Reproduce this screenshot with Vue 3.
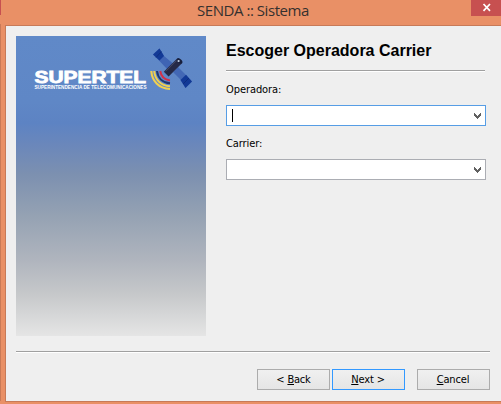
<script setup>
import { ref } from 'vue'

const fields = ref([
  { id: 'operadora', label: 'Operadora:', focused: true },
  { id: 'carrier', label: 'Carrier:', focused: false },
])
</script>

<template>
  <div class="window">
    <header class="titlebar">
      <h1>SENDA :: Sistema</h1>
      <button class="close" aria-label="Cerrar">
        <svg width="10" height="9" viewBox="0 0 10 9"><path d="M1.5 1 8 7.8M8 1 1.5 7.8" stroke="#fff" stroke-width="1.7" /></svg>
      </button>
    </header>
    <div class="body">
      <main class="content">
        <aside class="banner">
          <svg width="190" height="70" viewBox="16 36 190 70">
            <text class="brand" x="34.5" y="82.6" textLength="111.5" lengthAdjust="spacingAndGlyphs">SUPERTEL</text>
            <text class="tagline" x="34.5" y="88.9" textLength="112" lengthAdjust="spacingAndGlyphs">SUPERINTENDENCIA DE TELECOMUNICACIONES</text>
            <g fill="none">
              <path d="M151.3 71C152 81 158.5 88.5 170 89" stroke="#f0d050" stroke-width="2.1" />
              <path d="M154.2 71C155 79.5 160.5 85.7 170 86.3" stroke="#f0d050" stroke-width="2" />
              <path d="M157 71C157.8 77.8 162.5 82.7 170 83.3" stroke="#20376f" stroke-width="2" />
              <path d="M160.2 71C161 76 164.5 79.8 170 80.4" stroke="#d33148" stroke-width="2" />
            </g>
            <path d="M153 54.5 159.5 48.5 164 56 173 63.5 167 69 160 61.5Z" fill="#3f64b4" />
            <path d="M153 54.5 159.5 48.5 164 56 159.5 60.5Z" fill="#123996" />
            <path d="M173 72 178 67 184 73 192 81.5 185.5 88 180 79Z" fill="#4368b5" />
            <path d="M180.5 80 186 74.8 192 81.5 185.5 88Z" fill="#123996" />
            <path d="M156 57.5 161.5 51.5M183 84 189 78" stroke="#0b2876" stroke-width=".7" />
            <path d="M166.2 74.2 179.8 60.6" stroke="#252947" stroke-width="6.8" />
            <path d="M165.8 71.3 176.3 60.8" stroke="#50556f" stroke-width=".7" />
            <ellipse cx="179.7" cy="60.8" rx="1.8" ry="3.3" transform="rotate(-45 179.7 60.8)" fill="#17203d" />
            <circle cx="178.6" cy="61" r="1.1" fill="#c5cfe0" />
          </svg>
        </aside>
        <section class="form">
          <h2>Escoger Operadora Carrier</h2>
          <div v-for="field in fields" :key="field.id" class="field">
            <label>{{ field.label }}</label>
            <div class="combo" :class="{ focused: field.focused }">
              <i v-if="field.focused" class="caret"></i>
              <svg class="arrow" width="7" height="6" viewBox="0 0 7 6"><path d="M0 0h1v1h1v1h1v1h1V2h1V1h1V0h1v3H6v1H5v1H4v1H3V5H2V4H1V3H0Z" fill="#606060" /></svg>
            </div>
          </div>
        </section>
      </main>
      <footer>
        <button class="btn back"><span>&lt; <u>B</u>ack</span></button>
        <button class="btn next"><span><u>N</u>ext &gt;</span></button>
        <button class="btn cancel"><span><u>C</u>ancel</span></button>
      </footer>
    </div>
  </div>
</template>

<style>
body { margin: 0; overflow: hidden; }
</style>

<style scoped>
* { box-sizing: border-box; }
.window {
  width: 501px;
  height: 404px;
  display: flex;
  flex-direction: column;
  padding: 0 0 2px 5px;
  background:
    linear-gradient(#c75050 0 15px, #e99066 15px 24px, #c97a57 24px 401px, #e99066 401px) 0 0 / 1px 100% no-repeat,
    #e99066;
  font-family: "DejaVu Sans Condensed", "DejaVu Sans", sans-serif;
  color: #000;
}
.titlebar {
  height: 25px;
  display: flex;
  justify-content: space-between;
  align-items: flex-start;
}
h1 {
  margin: 0 0 0 192px;
  font: 400 15px/21px "Open Sans", sans-serif;
  letter-spacing: -.45px;
  color: #35302e;
  white-space: nowrap;
}
.close {
  width: 30px;
  height: 16px;
  padding: 0 0 2px 2px;
  border: 0;
  display: flex;
  align-items: center;
  justify-content: center;
  background: #c75050;
}
.body {
  flex: 1;
  border: 1px solid #c77a58;
  border-right: 0;
  background: #efefef;
  padding: 10px 11px 0 10px;
}
.content {
  height: 316px;
  display: flex;
  gap: 20px;
  border-bottom: 1px solid #a0a0a0;
  box-shadow: 0 1px #fff;
}
.banner {
  width: 190px;
  height: 300px;
  background: linear-gradient(#6089c8 0, #5f87c6 22%, #5d83c3 29%, #6a87bb 36%, #7c90b0 46%, #95a2b3 60%, #b0b5be 75%, #c6c8ca 86%, #e5e5e5 100%);
}
.banner svg { display: block; }
.brand { font: 700 16.6px "Liberation Sans", sans-serif; fill: #fff; stroke: #fff; stroke-width: .8px; }
.tagline { font: 700 5px "Liberation Sans", sans-serif; fill: #fff; }
.form { width: 260px; }
h2 {
  margin: 0 1px 0 0;
  height: 35px;
  border-bottom: 1px solid #a0a0a0;
  box-shadow: 0 1px #fff;
  font: 700 16px/29px "Liberation Sans", sans-serif;
  white-space: nowrap;
}
.field { height: 54px; padding-top: 10px; }
.field label { display: block; height: 24px; font-size: 11px; line-height: 17px; letter-spacing: -.08px; }
.combo {
  height: 21px;
  display: flex;
  align-items: center;
  border: 1px solid #abadb3;
  padding: 0 4px 0 5px;
  background: #fff;
}
.combo.focused { border-color: #569de5; }
.caret { width: 1px; height: 13px; margin-bottom: 1px; background: #000; }
.arrow { margin-left: auto; }
footer { display: flex; justify-content: flex-end; padding-top: 17px; }
.btn {
  width: 73px;
  height: 21px;
  padding: 0 1px 0 0;
  border: 1px solid #acacac;
  background: linear-gradient(#f0f0f0, #e5e5e5);
  font: 11px/19px "DejaVu Sans Condensed", "DejaVu Sans", sans-serif;
  letter-spacing: -.15px;
  color: #000;
}
.back { letter-spacing: -.2px; padding: 0; }
.btn u { text-underline-offset: 1px; text-decoration-thickness: 1px; }
.next { margin: 0 12px 0 2px; border-color: #3399ff; }
</style>
